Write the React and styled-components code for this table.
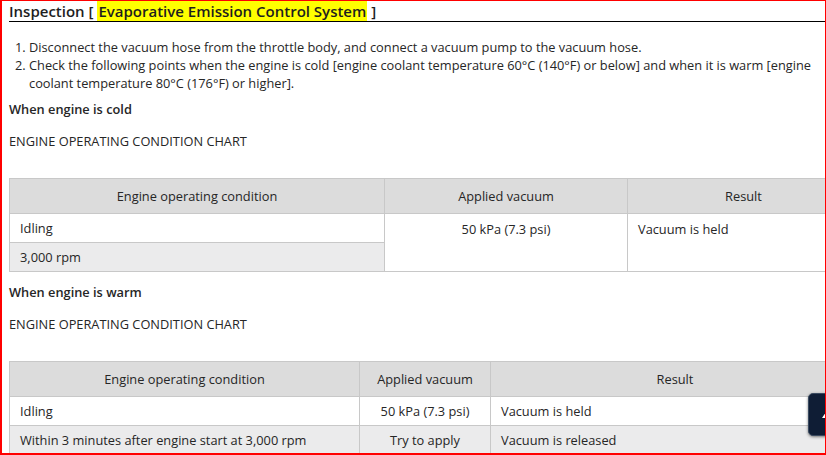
import styled, { createGlobalStyle } from "styled-components";

const GlobalStyle = createGlobalStyle`
  html, body {
    margin: 0;
    padding: 0;
    background: #fff;
  }
  body {
    font-family: "Open Sans", "Noto Sans", sans-serif;
    color: #262626;
  }
`

const Frame = styled.div`
  position: relative;
  box-sizing: border-box;
  width: 826px;
  height: 455px;
  border: 1px solid #f00;
  border-left-width: 2px;
  border-bottom-width: 2px;
  overflow: hidden;
`

const Page = styled.div`
  width: 851px;
  padding-left: 7px;
  font-size: 12.8px;
  line-height: 18px;
`

const Title = styled.div`
  font-size: 15px;
  font-weight: 600;
  line-height: 19px;
  padding-top: 1px;
  border-bottom: 1px solid #000;
  color: #1e1e1e;
`

const Mark = styled.span`
  background: #ffff00;
  padding: 0 1px;
`

const Steps = styled.ol`
  max-width: 795px;
  margin: 16px 0 0;
  padding-left: 20px;
`

const Label = styled.div`
  margin-top: ${(p) => p.$gap}px;
  font-weight: ${(p) => (p.$bold ? 600 : 400)};
`

const Table = styled.table`
  width: 100%;
  margin-top: 28px;
  border-collapse: collapse;
  table-layout: fixed;
`

const Head = styled.th`
  background: #dcdcdc;
  border: 1px solid #c8c8c8;
  font-weight: 400;
  padding: 8px 10px;
  text-align: center;
`

const Cell = styled.td`
  border: 1px solid #c8c8c8;
  padding: 5px 10px;
  vertical-align: top;
  text-align: ${(p) => (p.$center ? "center" : "left")};
  background: ${(p) => (p.$shade ? "#ebebec" : "#fff")};
`

const TopButton = styled.div`
  position: absolute;
  left: 806px;
  top: 392px;
  width: 36px;
  height: 43px;
  box-sizing: border-box;
  border-radius: 5px;
  background: #0f1d35;
  border: 1px solid #3a4a60;
  box-shadow: 0 1px 3px rgba(0, 0, 0, 0.5);
  display: flex;
  align-items: center;
  justify-content: center;
`

const ChartTable = ({ widths, rows }) => (
  <Table>
    <colgroup>
      {widths.map((w, i) => (
        <col key={i} style={{ width: w }} />
      ))}
    </colgroup>
    <thead>
      <tr>
        <Head>Engine operating condition</Head>
        <Head>Applied vacuum</Head>
        <Head>Result</Head>
      </tr>
    </thead>
    <tbody>{rows}</tbody>
  </Table>
)

function App() {
  return (
    <>
      <GlobalStyle />
      <Frame>
        <Page>
          <Title>
            Inspection [ <Mark>Evaporative Emission Control System</Mark> ]
          </Title>
          <Steps>
            <li>Disconnect the vacuum hose from the throttle body, and connect a vacuum pump to the vacuum hose.</li>
            <li>
              Check the following points when the engine is cold [engine coolant temperature 60°C (140°F) or below] and when it is warm [engine coolant temperature 80°C (176°F) or higher].
            </li>
          </Steps>

          <Label $gap={8} $bold>When engine is cold</Label>
          <Label $gap={14}>ENGINE OPERATING CONDITION CHART</Label>
          <ChartTable
            widths={[375, 243, "auto"]}
            rows={
              <>
                <tr>
                  <Cell>Idling</Cell>
                  <Cell $center rowSpan={2} style={{ paddingTop: 6 }}>50 kPa (7.3 psi)</Cell>
                  <Cell rowSpan={2} style={{ paddingTop: 6 }}>Vacuum is held</Cell>
                </tr>
                <tr>
                  <Cell $shade>3,000 rpm</Cell>
                </tr>
              </>
            }
          />

          <Label $gap={11} $bold>When engine is warm</Label>
          <Label $gap={14}>ENGINE OPERATING CONDITION CHART</Label>
          <ChartTable
            widths={[350, 131, "auto"]}
            rows={
              <>
                <tr>
                  <Cell>Idling</Cell>
                  <Cell $center>50 kPa (7.3 psi)</Cell>
                  <Cell>Vacuum is held</Cell>
                </tr>
                <tr>
                  <Cell $shade>Within 3 minutes after engine start at 3,000 rpm</Cell>
                  <Cell $shade $center>Try to apply</Cell>
                  <Cell $shade>Vacuum is released</Cell>
                </tr>
              </>
            }
          />
        </Page>
        <TopButton>
          <svg width="10" height="8" viewBox="0 0 10 8">
            <path d="M5 1 L9 7 L1 7 Z" fill="#fff" />
          </svg>
        </TopButton>
      </Frame>
    </>
  );
}

export default App;
